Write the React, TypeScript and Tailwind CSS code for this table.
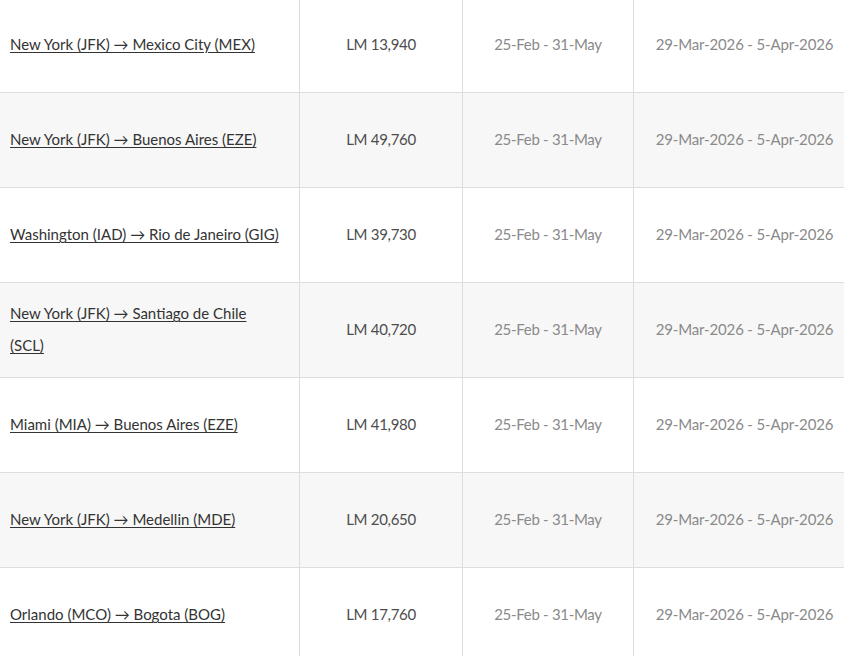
import React from "react";

const rows: { route: string; route2?: string; price: string }[] = [
  { route: "New York (JFK) → Mexico City (MEX)", price: "LM 13,940" },
  { route: "New York (JFK) → Buenos Aires (EZE)", price: "LM 49,760" },
  { route: "Washington (IAD) → Rio de Janeiro (GIG)", price: "LM 39,730" },
  { route: "New York (JFK) → Santiago de Chile", route2: "(SCL)", price: "LM 40,720" },
  { route: "Miami (MIA) → Buenos Aires (EZE)", price: "LM 41,980" },
  { route: "New York (JFK) → Medellin (MDE)", price: "LM 20,650" },
  { route: "Orlando (MCO) → Bogota (BOG)", price: "LM 17,760" },
];

export default function App() {
  return (
    <div
      className="w-[844px] h-[656px] overflow-hidden bg-white text-[15px]"
      style={{ fontFamily: "Lato, 'Open Sans', sans-serif" }}
    >
      <div className="w-[855px] -mt-[2px]">
        {rows.map((r, i) => (
          <div
            key={i}
            className={`grid grid-cols-[300px_163px_171px_221px] h-[95px] border-b border-[#dddddd] ${
              i % 2 === 1 ? "bg-[#f7f7f7]" : "bg-white"
            }`}
          >
            <div className="flex items-center pl-[10px] pr-[8px] pb-[2px] border-r border-[#dddddd] leading-[32px]">
              <a
                href="#"
                className="text-[#333333] underline underline-offset-2 decoration-1 whitespace-nowrap"
              >
                {r.route}
                {r.route2 ? (
                  <>
                    <br />
                    {r.route2}
                  </>
                ) : null}
              </a>
            </div>
            <div className="flex items-center justify-center pb-[2px] border-r border-[#dddddd] text-[#4d4d4d] tracking-[-0.3px]">
              {r.price}
            </div>
            <div className="flex items-center justify-center pb-[2px] border-r border-[#dddddd] text-[#8a8a8a] tracking-[-0.3px]">
              25-Feb - 31-May
            </div>
            <div className="flex items-center justify-center pb-[2px] text-[#8a8a8a] tracking-[-0.15px]">
              29-Mar-2026 - 5-Apr-2026
            </div>
          </div>
        ))}
      </div>
    </div>
  );
}
